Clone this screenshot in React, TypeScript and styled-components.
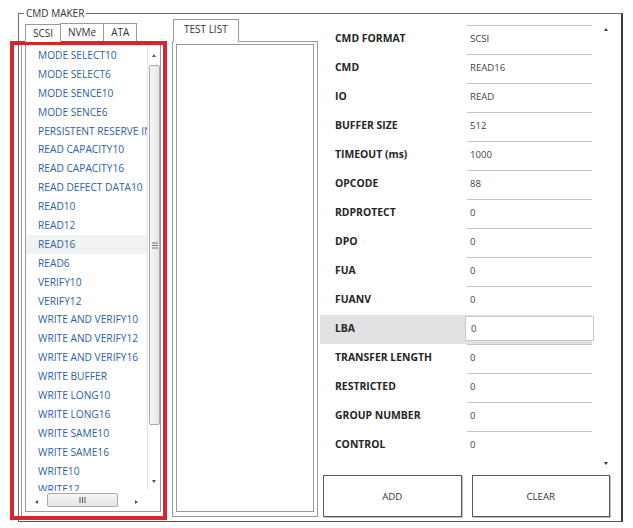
import styled, { createGlobalStyle } from "styled-components";

const GlobalStyle = createGlobalStyle`
  html, body { margin: 0; padding: 0; background: #fff; }
  body { font-family: "Open Sans", "Liberation Sans", sans-serif; }
`;

const SCSI_CMDS = [
  "MODE SELECT10",
  "MODE SELECT6",
  "MODE SENCE10",
  "MODE SENCE6",
  "PERSISTENT RESERVE IN",
  "READ CAPACITY10",
  "READ CAPACITY16",
  "READ DEFECT DATA10",
  "READ10",
  "READ12",
  "READ16",
  "READ6",
  "VERIFY10",
  "VERIFY12",
  "WRITE AND VERIFY10",
  "WRITE AND VERIFY12",
  "WRITE AND VERIFY16",
  "WRITE BUFFER",
  "WRITE LONG10",
  "WRITE LONG16",
  "WRITE SAME10",
  "WRITE SAME16",
  "WRITE10",
  "WRITE12",
];

const PROPS: [string, string][] = [
  ["CMD FORMAT", "SCSI"],
  ["CMD", "READ16"],
  ["IO", "READ"],
  ["BUFFER SIZE", "512"],
  ["TIMEOUT (ms)", "1000"],
  ["OPCODE", "88"],
  ["RDPROTECT", "0"],
  ["DPO", "0"],
  ["FUA", "0"],
  ["FUANV", "0"],
  ["LBA", "0"],
  ["TRANSFER LENGTH", "0"],
  ["RESTRICTED", "0"],
  ["GROUP NUMBER", "0"],
  ["CONTROL", "0"],
];

const App = () => {
  return (
    <>
      <GlobalStyle />
      <Page>
        <Group>
          <Legend>CMD MAKER</Legend>
          <Columns>
            <TabControl $width={144}>
              <TabStrip $indent={4}>
                <Tab $active>SCSI</Tab>
                <Tab>NVMe</Tab>
                <Tab>ATA</Tab>
              </TabStrip>
              <TabPage>
                <ListBox>
                  <Items>
                    {SCSI_CMDS.map((c) => (
                      <Item key={c} $selected={c === "READ16"}>
                        {c}
                      </Item>
                    ))}
                  </Items>
                  <VScroll>
                    <ArrowBtn $h={20}>
                      <Arrow $dir="up" />
                    </ArrowBtn>
                    <VThumb>
                      <svg width="6" height="7" viewBox="0 0 6 7">
                        <path d="M0 1h6M0 3.5h6M0 6h6" stroke="#777" strokeWidth="1" />
                      </svg>
                    </VThumb>
                    <Track />
                    <ArrowBtn $h={20}>
                      <Arrow $dir="down" />
                    </ArrowBtn>
                  </VScroll>
                  <HScroll>
                    <HArrowBtn $w={21}>
                      <Arrow $dir="left" />
                    </HArrowBtn>
                    <HThumb>
                      <svg width="7" height="6" viewBox="0 0 7 6">
                        <path d="M1 0v6M3.5 0v6M6 0v6" stroke="#555" strokeWidth="1" />
                      </svg>
                    </HThumb>
                    <Track />
                    <HArrowBtn $w={22}>
                      <Arrow $dir="right" />
                    </HArrowBtn>
                  </HScroll>
                  <Corner />
                </ListBox>
              </TabPage>
            </TabControl>

            <TabControl $width={146} $gap={7}>
              <TabStrip $indent={1}>
                <Tab $active $tall>
                  TEST LIST
                </Tab>
              </TabStrip>
              <TabPage>
                <PlainList />
              </TabPage>
            </TabControl>

            <RightPanel>
              <PropArea>
                <PropGrid>
                  {PROPS.map(([label, value]) => (
                    <PropRow key={label} $selected={label === "LBA"}>
                      <PropLabel>{label}</PropLabel>
                      <PropValue $selected={label === "LBA"}>{value}</PropValue>
                    </PropRow>
                  ))}
                </PropGrid>
                <PropScroll>
                  <Arrow $dir="up" $dark />
                  <Arrow $dir="down" $dark />
                </PropScroll>
              </PropArea>
              <ButtonRow>
                <Button>ADD</Button>
                <Button>CLEAR</Button>
              </ButtonRow>
            </RightPanel>
          </Columns>
        </Group>
        <RedMark />
      </Page>
    </>
  );
};

const Page = styled.div`
  position: relative;
  width: 633px;
  height: 528px;
  box-sizing: border-box;
  padding: 7px 0 0 18px;
  background: #fff;
`;

const Group = styled.fieldset`
  margin: 0;
  padding: 0;
  width: 605px;
  box-sizing: border-box;
  border: 1px solid #6e6e6e;
  border-right: 2px solid #3a3a3a;
  border-bottom: 1px solid #555;
  min-width: 0;
`;

const Legend = styled.legend`
  margin-left: 5px;
  padding: 0 2px;
  font-size: 10px;
  line-height: 12px;
  color: #333;
`;

const Columns = styled.div`
  display: flex;
  height: 502px;
  box-sizing: border-box;
  padding: 0 0 4px 2px;
`;

const TabControl = styled.div<{ $width: number; $gap?: number }>`
  width: ${(p) => p.$width}px;
  margin-left: ${(p) => p.$gap ?? 0}px;
  display: flex;
  flex-direction: column;
  flex-shrink: 0;
  min-height: 0;
`;

const TabStrip = styled.div<{ $indent: number }>`
  height: 22px;
  flex-shrink: 0;
  display: flex;
  align-items: flex-end;
  padding-left: ${(p) => p.$indent}px;
`;

const Tab = styled.div<{ $active?: boolean; $tall?: boolean }>`
  height: ${(p) => (p.$tall ? 23 : 18)}px;
  box-sizing: border-box;
  padding: 0 ${(p) => (p.$tall ? 10 : 7)}px;
  margin-right: -1px;
  margin-bottom: ${(p) => (p.$active ? -1 : 0)}px;
  border: 1px solid #9a9a9a;
  border-bottom: ${(p) => (p.$active ? "1px solid #fff" : "none")};
  background: #fff;
  font-size: 10px;
  line-height: ${(p) => (p.$tall ? 19 : 17)}px;
  color: #333;
  position: relative;
  z-index: 1;
`;

const TabPage = styled.div`
  flex: 1;
  min-height: 0;
  border: 1px solid #9a9a9a;
  padding: 2px 3px 4px 3px;
  display: flex;
  background: #fff;
`;

const ListBox = styled.div`
  flex: 1;
  min-height: 0;
  border: 1px solid #9a9a9a;
  display: grid;
  grid-template-columns: minmax(0, 1fr) 13px;
  grid-template-rows: minmax(0, 1fr) 20px;
  overflow: hidden;
`;

const Items = styled.div`
  overflow: hidden;
  min-height: 0;
  padding-top: 1px;
`;

const Item = styled.div<{ $selected?: boolean }>`
  height: 18.9px;
  line-height: 18.9px;
  padding-left: 12px;
  white-space: nowrap;
  font-size: 10.2px;
  color: #2d62a8;
  background: ${(p) => (p.$selected ? "#f1f2f4" : "transparent")};
`;

const VScroll = styled.div`
  display: flex;
  flex-direction: column;
  min-height: 0;
  border-left: 1px solid #e4e4e4;
`;

const ArrowBtn = styled.div<{ $h: number }>`
  height: ${(p) => p.$h}px;
  display: flex;
  align-items: center;
  justify-content: center;
  flex-shrink: 0;
`;

const HArrowBtn = styled.div<{ $w: number }>`
  width: ${(p) => p.$w}px;
  display: flex;
  align-items: center;
  justify-content: center;
  flex-shrink: 0;
`;

const Track = styled.div`
  flex: 1;
`;

const VThumb = styled.div`
  height: 360px;
  flex-shrink: 0;
  margin: 0 0 0 1px;
  box-sizing: border-box;
  border: 1px solid #a8a8a8;
  border-radius: 2px;
  background: linear-gradient(90deg, #f6f6f6, #e6e6e6);
  display: flex;
  align-items: center;
  justify-content: center;
`;

const HScroll = styled.div`
  display: flex;
  align-items: flex-start;
  padding-top: 2px;
  background: #fff;
`;

const HThumb = styled.div`
  width: 71px;
  height: 14px;
  flex-shrink: 0;
  box-sizing: border-box;
  border: 1px solid #a8a8a8;
  border-radius: 2px;
  background: linear-gradient(180deg, #f6f6f6, #e4e4e4);
  display: flex;
  align-items: center;
  justify-content: center;
`;

const Corner = styled.div`
  background: #fff;
`;

const Arrow = styled.div<{ $dir: "up" | "down" | "left" | "right"; $dark?: boolean }>`
  width: 0;
  height: 0;
  border-style: solid;
  border-color: transparent;
  ${(p) => {
    const c = p.$dark ? "#333" : "#555";
    switch (p.$dir) {
      case "up":
        return `border-width: 0 2.5px 3px 2.5px; border-bottom-color: ${c};`;
      case "down":
        return `border-width: 3px 2.5px 0 2.5px; border-top-color: ${c};`;
      case "left":
        return `border-width: 2.5px 3px 2.5px 0; border-right-color: ${c}; margin-top: 7px;`;
      default:
        return `border-width: 2.5px 0 2.5px 3px; border-left-color: ${c}; margin-top: 7px;`;
    }
  }}
`;

const PlainList = styled.div`
  flex: 1;
  border: 1px solid #9a9a9a;
  background: #fff;
`;

const RightPanel = styled.div`
  flex: 1;
  display: flex;
  flex-direction: column;
  min-width: 0;
`;

const PropArea = styled.div`
  flex: 1;
  display: flex;
  padding-top: 6px;
`;

const PropGrid = styled.div`
  width: 274px;
  display: flex;
  flex-direction: column;
`;

const PropRow = styled.div<{ $selected?: boolean }>`
  height: 29px;
  flex-shrink: 0;
  display: grid;
  grid-template-columns: 147px 125px;
  margin-left: ${(p) => (p.$selected ? 2 : 0)}px;
  padding-left: ${(p) => (p.$selected ? 0 : 2)}px;
  background: ${(p) => (p.$selected ? "#e2e2e2" : "transparent")};
`;

const PropLabel = styled.div`
  padding-left: 15px;
  font-size: 10.4px;
  font-weight: 700;
  line-height: 27px;
  color: #252525;
  white-space: nowrap;
`;

const PropValue = styled.div<{ $selected?: boolean }>`
  border-top: 1px solid #c4c4c4;
  padding-left: 3px;
  font-size: 9.6px;
  line-height: 26px;
  color: #444;
  ${(p) =>
    p.$selected &&
    `
    background: #fff;
    border: 1px solid #c8c8c8;
    margin: 1px -2px 3px -2px;
    padding-left: 5px;
    line-height: 23px;
  `}
`;

const PropScroll = styled.div`
  flex: 1;
  display: flex;
  flex-direction: column;
  justify-content: space-between;
  align-items: center;
  padding: 3px 2px 10px 0;
`;

const ButtonRow = styled.div`
  display: flex;
  gap: 10px;
  padding: 0 11px 0 5px;
`;

const Button = styled.div`
  flex: 1;
  height: 42px;
  box-sizing: border-box;
  border: 1px solid #5a5a5a;
  background: #fff;
  box-shadow: 1px 1px 0 #bdbdbd;
  display: flex;
  align-items: center;
  justify-content: center;
  font-size: 9.6px;
  color: #333;
`;

const RedMark = styled.div`
  position: absolute;
  left: 10px;
  top: 41px;
  width: 157px;
  height: 479px;
  box-sizing: border-box;
  border: 4px solid #d6282c;
  pointer-events: none;
`;

export default App;
